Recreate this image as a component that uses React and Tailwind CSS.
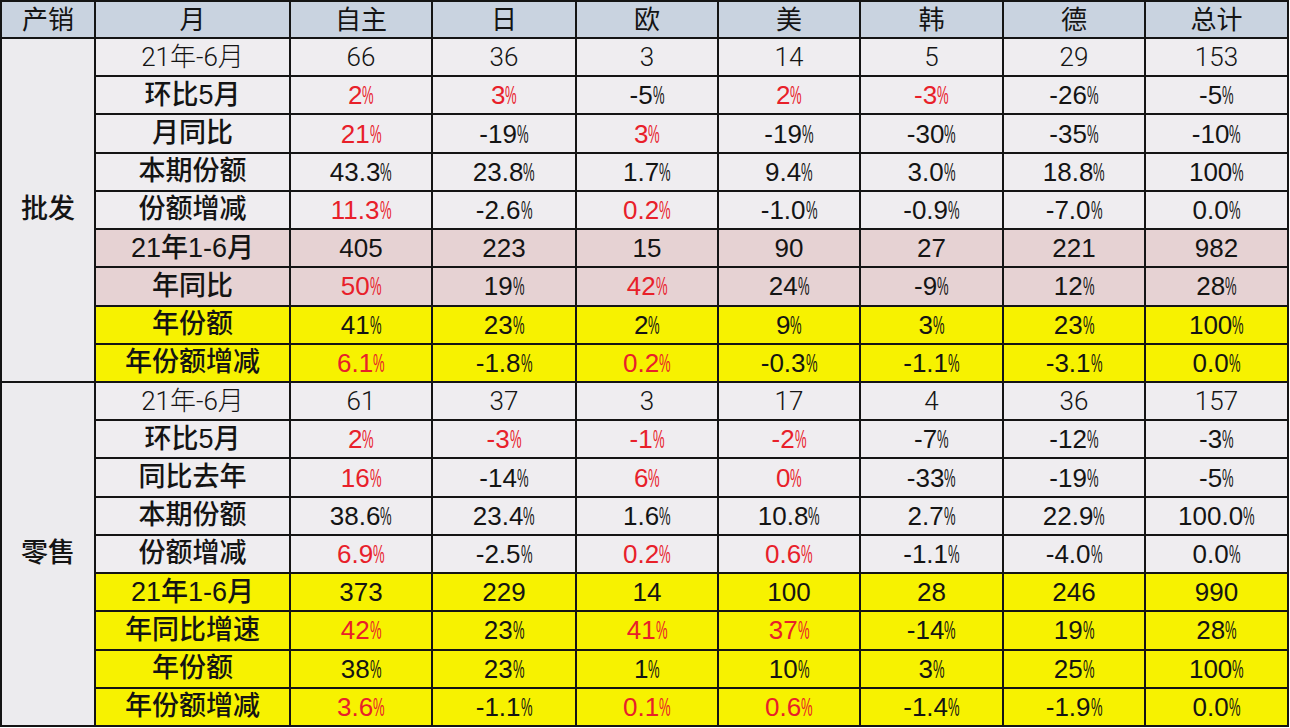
import React from "react";

const FONT = { fontFamily: '"Liberation Sans", "Noto Sans CJK SC", sans-serif' };
const LIGHT = { fontFamily: 'Roboto, "Noto Sans CJK SC", sans-serif', fontWeight: 300 };

const heads = ["产销", "月", "自主", "日", "欧", "美", "韩", "德", "总计"];

// r: red value marker
const sections = [
  {
    name: "批发",
    rows: [
      { label: "21年-6月", kind: "plain", light: true, vals: ["66", "36", "3", "14", "5", "29", "153"] },
      { label: "环比5月", kind: "plain", vals: ["2%r", "3%r", "-5%", "2%r", "-3%r", "-26%", "-5%"] },
      { label: "月同比", kind: "plain", vals: ["21%r", "-19%", "3%r", "-19%", "-30%", "-35%", "-10%"] },
      { label: "本期份额", kind: "plain", vals: ["43.3%", "23.8%", "1.7%", "9.4%", "3.0%", "18.8%", "100%"] },
      { label: "份额增减", kind: "plain", vals: ["11.3%r", "-2.6%", "0.2%r", "-1.0%", "-0.9%", "-7.0%", "0.0%"] },
      { label: "21年1-6月", kind: "pink", vals: ["405", "223", "15", "90", "27", "221", "982"] },
      { label: "年同比", kind: "pink", vals: ["50%r", "19%", "42%r", "24%", "-9%", "12%", "28%"] },
      { label: "年份额", kind: "yellow", vals: ["41%", "23%", "2%", "9%", "3%", "23%", "100%"] },
      { label: "年份额增减", kind: "yellow", vals: ["6.1%r", "-1.8%", "0.2%r", "-0.3%", "-1.1%", "-3.1%", "0.0%"] },
    ],
  },
  {
    name: "零售",
    rows: [
      { label: "21年-6月", kind: "plain", light: true, vals: ["61", "37", "3", "17", "4", "36", "157"] },
      { label: "环比5月", kind: "plain", vals: ["2%r", "-3%r", "-1%r", "-2%r", "-7%", "-12%", "-3%"] },
      { label: "同比去年", kind: "plain", vals: ["16%r", "-14%", "6%r", "0%r", "-33%", "-19%", "-5%"] },
      { label: "本期份额", kind: "plain", vals: ["38.6%", "23.4%", "1.6%", "10.8%", "2.7%", "22.9%", "100.0%"] },
      { label: "份额增减", kind: "plain", vals: ["6.9%r", "-2.5%", "0.2%r", "0.6%r", "-1.1%", "-4.0%", "0.0%"] },
      { label: "21年1-6月", kind: "yellow", vals: ["373", "229", "14", "100", "28", "246", "990"] },
      { label: "年同比增速", kind: "yellow", vals: ["42%r", "23%", "41%r", "37%r", "-14%", "19%", "28%"] },
      { label: "年份额", kind: "yellow", vals: ["38%", "23%", "1%", "10%", "3%", "25%", "100%"] },
      { label: "年份额增减", kind: "yellow", vals: ["3.6%r", "-1.1%", "0.1%r", "0.6%r", "-1.4%", "-1.9%", "0.0%"] },
    ],
  },
];

const bgFor = {
  plain: "bg-[#efedf0]",
  pink: "bg-[#e6d2d3]",
  yellow: "bg-[#f7f200]",
};

function Val({ v }) {
  const red = v.endsWith("r");
  const txt = red ? v.slice(0, -1) : v;
  const pct = txt.endsWith("%");
  const num = pct ? txt.slice(0, -1) : txt;
  return (
    <span className={red ? "text-[#e8202a]" : "text-[#141414]"}>
      {num}
      {pct && (
        <span className="inline-block origin-left scale-x-[0.5] -mr-[0.44em]">%</span>
      )}
    </span>
  );
}

export default function App() {
  return (
    <div className="w-[1290px] h-[728px] bg-white overflow-hidden" style={FONT}>
      <div className="grid w-[1289px] h-[727px] bg-[#141414] p-[2px] gap-[2px] grid-cols-[92px_193px_140px_142px_140px_140px_141px_140px_141px] grid-rows-[35px_repeat(18,minmax(0,1fr))] text-[26px] leading-none">
        {heads.map((h) => (
          <div key={h} className="bg-[#c9d3e0] flex items-center justify-center text-[#141414]">
            {h}
          </div>
        ))}
        {sections.map((sec, si) => (
          <React.Fragment key={sec.name}>
            <div
              className={`bg-[#ecebee] flex items-center justify-center font-medium text-[27px] text-[#141414] ${
                si === 0 ? "row-start-2 row-span-9" : "row-start-11 row-span-9"
              } col-start-1`}
            >
              {sec.name}
            </div>
            {sec.rows.map((row, ri) => (
              <React.Fragment key={ri}>
                <div
                  className={`${bgFor[row.kind]} col-start-2 flex items-center justify-center text-[#141414] ${
                    row.light ? "" : "font-medium text-[27px]"
                  }`}
                  style={row.light ? LIGHT : undefined}
                >
                  {row.label}
                </div>
                {row.vals.map((v, vi) => (
                  <div
                    key={vi}
                    className={`${bgFor[row.kind]} flex items-center justify-center`}
                    style={row.light ? LIGHT : undefined}
                  >
                    <Val v={v} />
                  </div>
                ))}
              </React.Fragment>
            ))}
          </React.Fragment>
        ))}
      </div>
    </div>
  );
}
